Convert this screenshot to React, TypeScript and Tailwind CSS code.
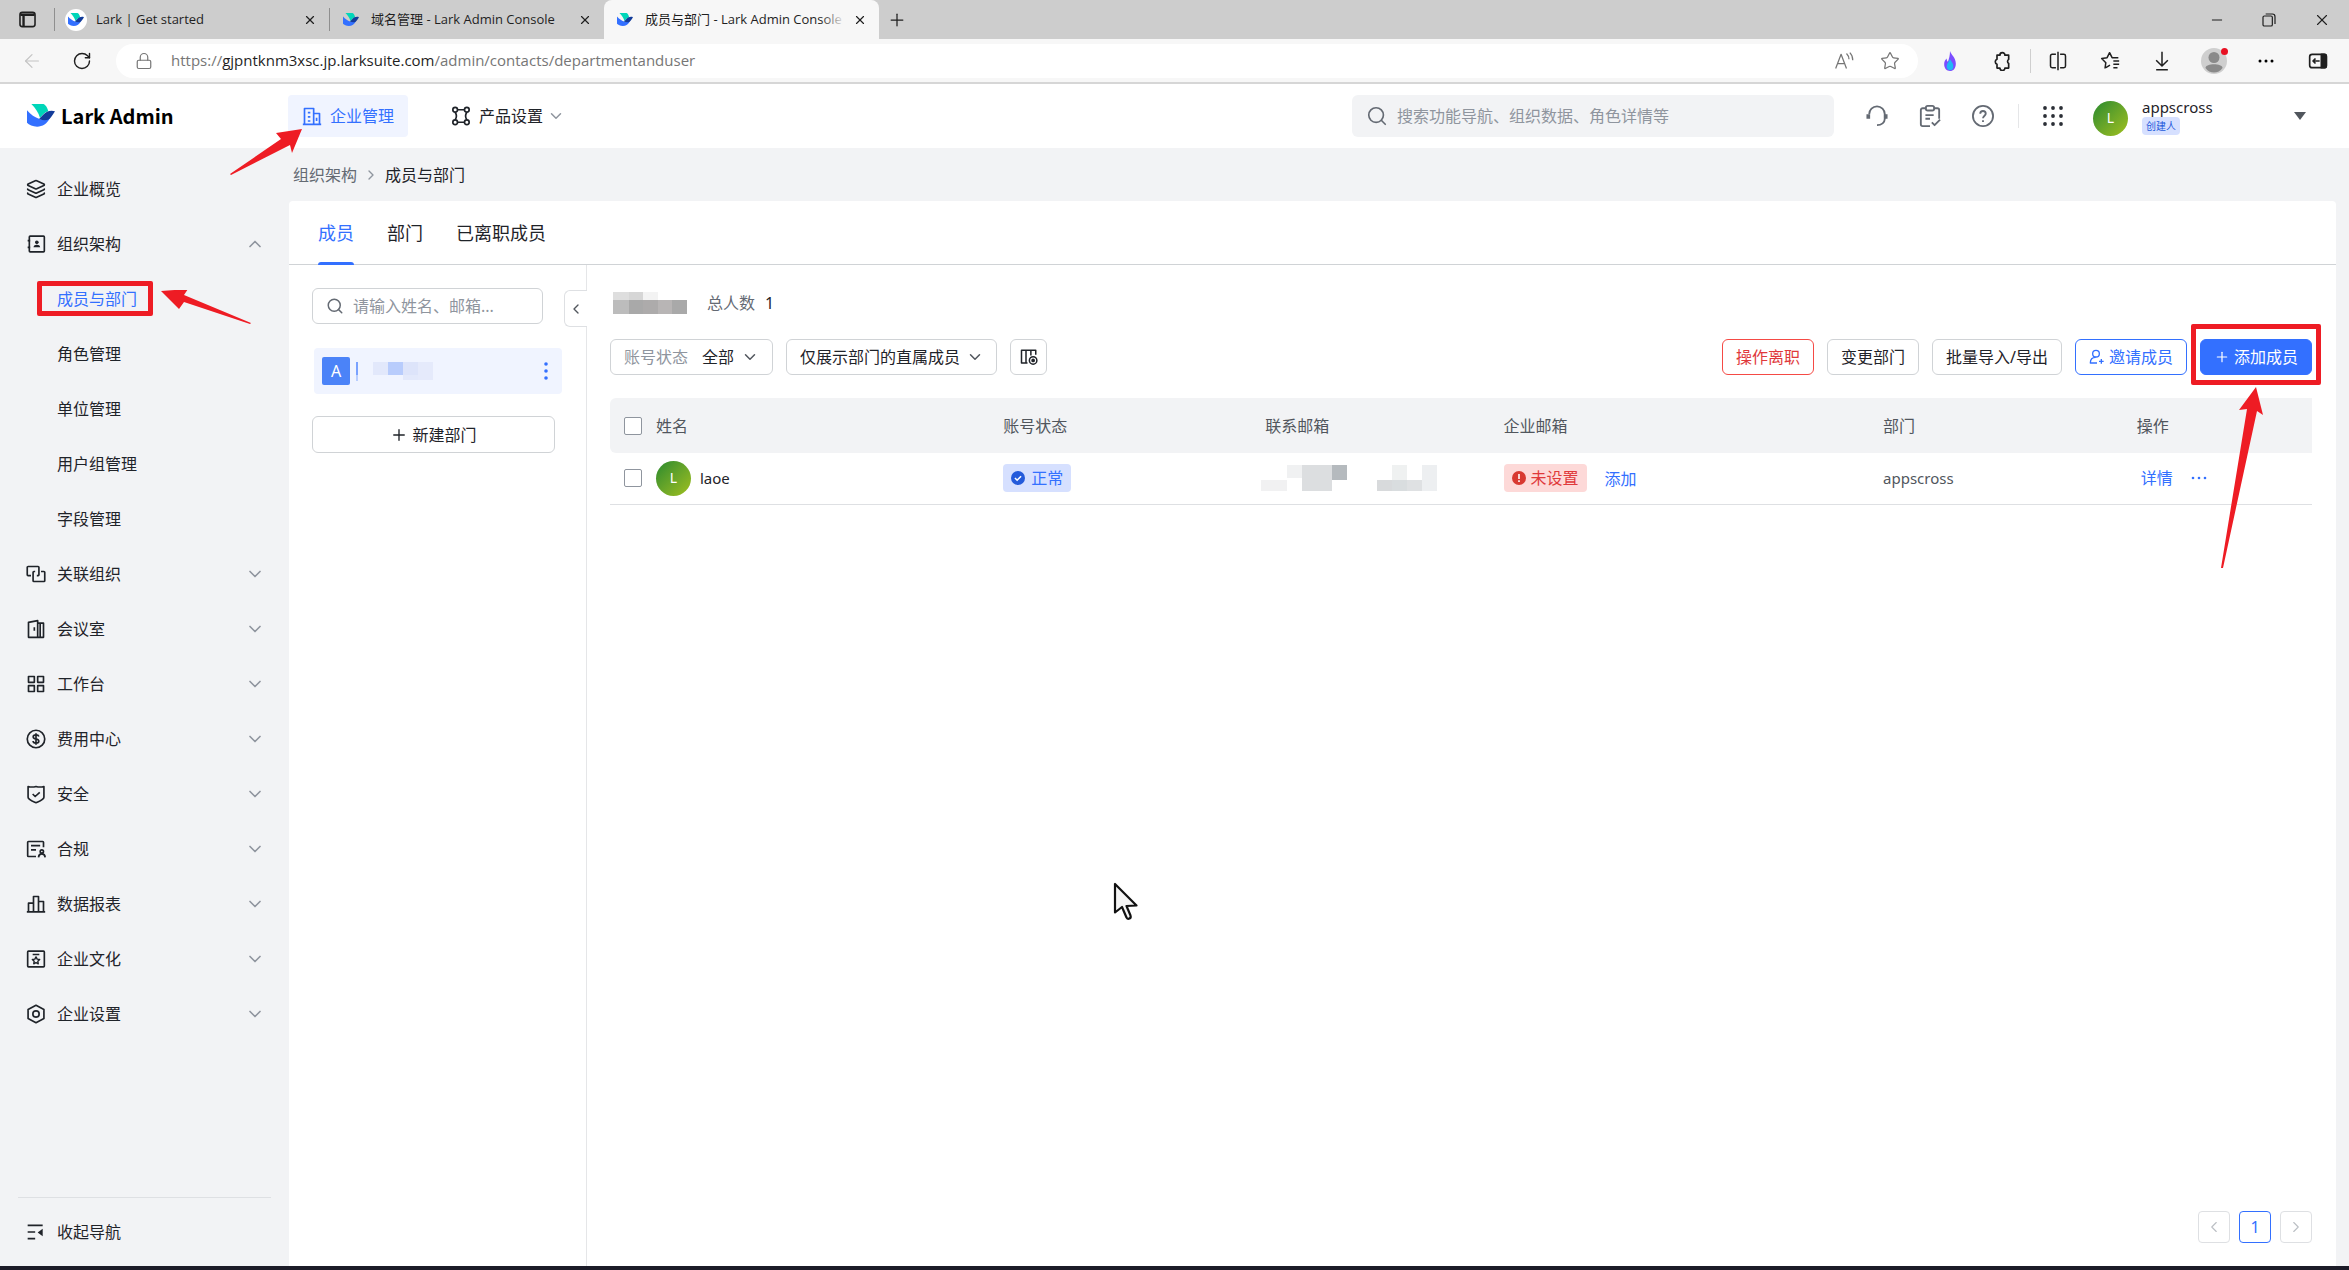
import type { ReactNode } from "react";
import { Layers, Search, X, Plus, Minus, Lock, RotateCw, ArrowLeft, Star, ChevronDown, ChevronUp, ChevronLeft, ChevronRight } from "lucide-react";

const Svg = ({ children, className = "size-5" }: { children: ReactNode; className?: string }) => (
  <svg viewBox="0 0 24 24" fill="none" stroke="currentColor" strokeWidth={2} strokeLinejoin="round" className={`${className} shrink-0`}>
    {children}
  </svg>
);

const LarkLogo = ({ className }: { className: string }) => (
  <svg viewBox="0 0 29 24" className={`${className} shrink-0`}>
    <path d="M4.500 0h12.500c1.500 0 4.500 4 5 7.500-3 .5-5.500 3.500-8.500 7C12 9 8.500 4 4.500 0z" fill="#00d6b9" />
    <path d="M0 6.500c4 4.500 8 7.500 13 9 4 1.200 8 .5 11-1.500-3 6.500-8 9.500-13.500 9.500C6 23.500 2 21.500 0 19.500z" fill="#3370ff" />
    <path d="M29 7.500c-5-1.500-9 .3-12 3.500l-4.500 4.500c5 2 10 2 12.500-2C26.500 11.500 27.500 9.500 29 7.500z" fill="#133c9a" />
  </svg>
);

type NavItem = { label: string; icon?: ReactNode; chevron?: "up" | "down"; active?: boolean };

const navItems: NavItem[] = [
  { label: "企业概览", icon: <Layers className="size-5 shrink-0" /> },
  {
    label: "组织架构",
    chevron: "up",
    icon: (
      <Svg>
        <rect x="4" y="2.500" width="18" height="19" rx="1" />
        <path d="M2 8h3M2 16h3" />
        <circle cx="13" cy="10" r="2.200" fill="currentColor" stroke="none" />
        <path d="M9 16c0-4 8-4 8 0z" fill="currentColor" stroke="none" />
      </Svg>
    ),
  },
  { label: "成员与部门", active: true },
  { label: "角色管理" },
  { label: "单位管理" },
  { label: "用户组管理" },
  { label: "字段管理" },
  {
    label: "关联组织",
    chevron: "down",
    icon: (
      <Svg>
        <path d="M6 14H2.500a1 1 0 0 1-1-1V4a1 1 0 0 1 1-1h12a1 1 0 0 1 1 1v9a1 1 0 0 1-1 1H13" />
        <path d="M18 9h3.500a1 1 0 0 1 1 1v10a1 1 0 0 1-1 1h-12a1 1 0 0 1-1-1V10a1 1 0 0 1 1-1H11" />
      </Svg>
    ),
  },
  {
    label: "会议室",
    chevron: "down",
    icon: (
      <Svg>
        <path d="M3 4l11-2v20H3zM14 5h7v17h-7M17 5v17M10 10v4" />
      </Svg>
    ),
  },
  {
    label: "工作台",
    chevron: "down",
    icon: (
      <Svg>
        <path d="M3 3h7v7H3zM14 3h7v7h-7zM3 14h7v7H3zM14 14h7v7h-7z" />
      </Svg>
    ),
  },
  {
    label: "费用中心",
    chevron: "down",
    icon: (
      <Svg>
        <circle cx="12" cy="12" r="10.500" />
        <path d="M15.500 9c-.5-1.500-2-2-3.500-2-4.500 0-4.500 4.500 0 5s4.500 5 0 5c-2 0-3.500-1-3.500-2.500M12 5v14" />
      </Svg>
    ),
  },
  {
    label: "安全",
    chevron: "down",
    icon: (
      <Svg>
        <path d="M2.500 3c3 .8 6.500.8 9.500 0 3 .8 6.500.8 9.500 0v13c0 3-6 5-9.500 6.500C8.500 21 2.500 19 2.500 16zM8 12l3 3 5.500-5" />
      </Svg>
    ),
  },
  {
    label: "合规",
    chevron: "down",
    icon: (
      <Svg>
        <path d="M12 21H3a1 1 0 0 1-1-1V4a1 1 0 0 1 1-1h17a1 1 0 0 1 1 1v6M6 8h11M6 13h6" />
        <circle cx="19" cy="15" r="2" />
        <path d="M15 22c.5-5.500 7.500-5.500 8 0" />
      </Svg>
    ),
  },
  {
    label: "数据报表",
    chevron: "down",
    icon: (
      <Svg>
        <path d="M1 21.500h22M3 21V11h6M9 21V3h6v18M15 9h6v12" />
      </Svg>
    ),
  },
  {
    label: "企业文化",
    chevron: "down",
    icon: (
      <Svg>
        <rect x="2" y="2.500" width="20" height="19" rx="1" />
        <path d="M8 6.500h8M12 9.500l1.400 2.700 3 .4-2.200 2.100.5 3-2.700-1.400-2.700 1.400.5-3-2.200-2.100 3-.4z" strokeWidth={1.700} />
      </Svg>
    ),
  },
  {
    label: "企业设置",
    chevron: "down",
    icon: (
      <Svg>
        <path d="M12 1.500l9.500 5v11l-9.500 5-9.500-5v-11z" />
        <circle cx="12" cy="12" r="3.800" />
      </Svg>
    ),
  },
];

function BrowserTab({ title, active, round }: { title: string; active?: boolean; round?: boolean }) {
  return (
    <div className={`flex w-[275px] items-center pr-3 pl-[10px] ${active ? "rounded-t-lg bg-[#f7f7f7]" : "my-2 border-l border-[#8f8f8f]"}`}>
      <span className={`flex size-[22px] shrink-0 items-center justify-center rounded-full ${round ? "bg-white" : ""}`}>
        <LarkLogo className="w-4" />
      </span>
      <span className="relative ml-[9px] flex-1 overflow-hidden text-[13px] whitespace-nowrap">
        {title}
        {active && <span className="absolute inset-y-0 right-0 w-6 bg-linear-to-r from-transparent to-[#f7f7f7]" />}
      </span>
      <button aria-label="关闭标签页" className="ml-2">
        <X className="size-[14px]" strokeWidth={2} />
      </button>
    </div>
  );
}

function BrowserChrome() {
  return (
    <div className="font-['Open_Sans','Noto_Sans_CJK_SC',sans-serif] text-[#1f1f1f]">
      <div className="flex h-[39px] bg-[#cdcdcd]">
        <button aria-label="标签操作" className="w-[54px] pl-[18px]">
          <Svg className="size-[19px]">
            <rect x="2.500" y="3" width="19" height="18" rx="3" />
            <path d="M3 6h18M7 6v15" strokeWidth={3} />
          </Svg>
        </button>
        <BrowserTab title="Lark | Get started" round />
        <BrowserTab title="域名管理 - Lark Admin Console" />
        <BrowserTab title="成员与部门 - Lark Admin Console" active />
        <button aria-label="新建标签页" className="ml-2">
          <Plus className="size-5" strokeWidth={1.500} />
        </button>
        <div className="ml-auto flex items-center gap-9 pr-[18px]">
          <button aria-label="最小化"><Minus className="size-4" strokeWidth={1.500} /></button>
          <button aria-label="还原">
            <Svg className="size-4">
              <rect x="3" y="6" width="14" height="15" rx="2" strokeWidth={1.800} />
              <path d="M7 3h10a4 4 0 0 1 4 4v11" strokeWidth={1.800} />
            </Svg>
          </button>
          <button aria-label="关闭"><X className="size-[18px]" strokeWidth={1.500} /></button>
        </div>
      </div>
      <div className="flex h-[45px] items-center border-b-2 border-[#d6d6d6] bg-[#f7f7f7]">
        <button aria-label="后退" className="ml-[21px] text-[#c4c4c4]"><ArrowLeft className="size-[22px]" strokeWidth={1.300} /></button>
        <button aria-label="刷新" className="ml-[29px]"><RotateCw className="size-5" strokeWidth={1.700} /></button>
        <div className="ml-6 flex h-[34px] flex-1 items-center rounded-full bg-white pr-[18px] pl-[19px] text-[15px] text-[#767676]">
          <Lock className="size-[18px]" strokeWidth={1.600} />
          <span className="ml-[18px]">
            https://<span className="text-[#1f1f1f]">gjpntknm3xsc.jp.larksuite.com</span>/admin/contacts/departmentanduser
          </span>
          <button aria-label="朗读此页" className="ml-auto">
            <Svg className="size-5">
              <path d="M2 21L8.500 4 15 21M4.500 15h8M15 3c2 2 3 4 3 7M19 2c2.500 2.500 3.500 6 3.500 9" strokeWidth={1.500} />
            </Svg>
          </button>
          <button aria-label="收藏" className="ml-[26px]"><Star className="size-5" strokeWidth={1.500} /></button>
        </div>
        <div className="flex items-center gap-8 pr-[21px] pl-[22px]">
          <button aria-label="扩展程序">
            <svg viewBox="0 0 24 24" className="size-5">
              <path d="M12 0c1 4 7 8 7 15 0 6-3 9-7 9s-7-3-7-8c0-3 1-5 3-7 0 2 .5 3 1.500 4C11 9 12 5 12 0z" fill="#7b4dff" />
              <path d="M12 10c2 3 4 5 4 8.500S14 23 12 23s-4-1.500-4-4.500 2-5 4-8.500z" fill="#22b8f5" />
            </svg>
          </button>
          <button aria-label="扩展">
            <Svg className="size-5">
              <path d="M6 5h3.500a3 3 0 0 1 6 0H20v5a3 3 0 0 0 0 5v5.500h-4.500a3 3 0 0 1-6 0H6V16a3.200 3.200 0 0 1 0-6z" />
            </Svg>
          </button>
          <button aria-label="分屏" className="relative ml-1">
            <span className="absolute -left-[18px] h-6 w-px -translate-y-0.5 bg-[#cfcfcf]" />
            <Svg className="size-5">
              <path d="M9.500 4H5a2 2 0 0 0-2 2v12a2 2 0 0 0 2 2h4.500M14.500 4H19a2 2 0 0 1 2 2v12a2 2 0 0 1-2 2h-4.500M12 1v22" strokeWidth={1.800} />
            </Svg>
          </button>
          <button aria-label="收藏夹">
            <Svg className="size-5">
              <path d="M6 21l1-7-5-5 6.500-1L11.500 2l3 6H22M7 20l5-3M16 12h7M16 16h7M16 20h5" strokeWidth={1.800} />
            </Svg>
          </button>
          <button aria-label="下载">
            <Svg className="size-5">
              <path d="M12 1v17M5 11l7 7 7-7M5 22.500h14" strokeWidth={1.800} />
            </Svg>
          </button>
          <button aria-label="用户" className="relative -mx-[3px] size-[26px]">
            <svg viewBox="0 0 26 26">
              <circle cx="13" cy="13" r="13" fill="#cfcfcf" />
              <circle cx="13" cy="9.500" r="5.500" fill="#8a8a8a" />
              <path d="M4.500 20c0-5 17-5 17 0-4 6-13 6-17 0z" fill="#8a8a8a" />
            </svg>
            <span className="absolute top-0 -right-px size-[7px] rounded-full bg-[#e81123]" />
          </button>
          <button aria-label="更多">
            <svg viewBox="0 0 20 20" className="size-5">
              <circle cx="4" cy="10" r="1.500" />
              <circle cx="10" cy="10" r="1.500" />
              <circle cx="16" cy="10" r="1.500" />
            </svg>
          </button>
          <button aria-label="边栏">
            <Svg className="size-5">
              <rect x="2" y="4" width="20" height="16" rx="3" />
              <path d="M16 4h4a2 2 0 0 1 2 2v12a2 2 0 0 1-2 2h-4z" fill="currentColor" />
              <path d="M14 12H6M9 9l-3 3 3 3" />
            </Svg>
          </button>
        </div>
      </div>
    </div>
  );
}

function Header() {
  return (
    <header className="flex h-16 items-center bg-white text-base">
      <a href="#" className="ml-[27px] flex w-[261px] items-center gap-[6px] font-['Noto_Sans_CJK_SC',sans-serif] text-xl font-bold text-black">
        <LarkLogo className="w-7" />
        Lark Admin
      </a>
      <a href="#" className="relative flex h-[42px] items-center gap-2 rounded bg-[#f0f4ff] pr-[14px] pl-[14px] text-[#3370ff]">
        <Svg>
          <path d="M1 22h22M3 22V3h11v19M14 9h7v13M7 8h3M7 13h3M7 18h3M17.500 14v4" />
        </Svg>
        企业管理
        <svg viewBox="0 0 72 46" className="absolute top-[34px] -left-[58px] h-[46px] w-[72px]" fill="#ee1c24">
          <path d="M72 0L46 4l5 6L0 45l1 1 59-30 2 8z" />
        </svg>
      </a>
      <button className="ml-[43px] flex items-center gap-2">
        <Svg>
          <circle cx="5" cy="4.500" r="2.800" />
          <circle cx="19" cy="4.500" r="2.800" />
          <circle cx="5" cy="19.500" r="2.800" />
          <circle cx="19" cy="19.500" r="2.800" />
          <path d="M8 4.500h8M8 19.500h8M5 7.500c2 3 2 6 0 9M19 7.500c-2 3-2 6 0 9" />
        </Svg>
        产品设置
        <ChevronDown className="-ml-1 size-[18px] text-[#8f959e]" />
      </button>
      <label className="ml-auto flex h-[42px] w-[482px] items-center rounded-md bg-[#f2f3f5] pl-[14px] text-[#646a73]">
        <Search className="size-[22px]" strokeWidth={1.800} />
        <input aria-label="搜索" placeholder="搜索功能导航、组织数据、角色详情等" className="ml-[9px] flex-1 outline-none placeholder:text-[#8f959e]" />
      </label>
      <div className="ml-8 flex items-center gap-[31px] text-[#646a73]">
        <button aria-label="客服">
          <Svg className="size-[22px]">
            <path d="M3.500 10a8.500 8.500 0 0 1 17 0v5c0 4-3.500 7-8.500 7" />
            <path d="M2.500 10v5M21.500 10v5" strokeWidth={4} />
          </Svg>
        </button>
        <button aria-label="任务">
          <Svg className="size-[22px]">
            <path d="M8 3.500H4a2 2 0 0 0-2 2V21a2 2 0 0 0 2 2h8M16 3.500h4a2 2 0 0 1 2 2V15M7 11h9M7 15h5M14 19l3 3 6-6" />
            <rect x="7.500" y="1" width="9" height="5" rx="2" />
          </Svg>
        </button>
        <button aria-label="帮助">
          <Svg className="size-[22px]">
            <circle cx="12" cy="12" r="11" />
            <path d="M9 9.500c0-4 6-4 6 0 0 2-3 2.500-3 5M12 16.500v2" />
          </Svg>
        </button>
      </div>
      <span className="ml-6 h-6 w-px bg-[#e5e6e8]" />
      <button aria-label="应用" className="ml-6 text-[#2b2f36]">
        <svg viewBox="0 0 20 20" className="size-5" fill="currentColor">
          {[2, 10, 18].map((y) => [2, 10, 18].map((x) => <circle key={`${x}-${y}`} cx={x} cy={y} r="1.900" />))}
        </svg>
      </button>
      <Avatar className="mt-1 ml-[30px]" />
      <button className="ml-[14px] flex max-w-[207px] flex-1 items-center justify-between pr-[43px] text-left">
        <span>
          <span className="block text-[15px] leading-[18px]">appscross</span>
          <span className="mt-px block w-[38px] rounded bg-[#d6e0ff] text-center text-[10px] leading-[18px] text-[#245bdb]">创建人</span>
        </span>
        <span className="border-x-6 border-t-8 border-x-transparent border-t-[#51565d]" />
      </button>
    </header>
  );
}

function Avatar({ className = "" }: { className?: string }) {
  return (
    <span className={`flex size-[35px] shrink-0 items-center justify-center rounded-full bg-linear-to-br from-[#1f8a2d] to-[#9fc01c] text-sm text-white ${className}`}>
      L
    </span>
  );
}

function Sidebar() {
  return (
    <aside className="flex w-[289px] shrink-0 flex-col pt-[13px]">
      <nav className="flex-1">
        {navItems.map((item) => (
          <a key={item.label} href="#" className={`relative flex h-[55px] items-center gap-[11px] pr-6 pl-[26px] ${item.active ? "text-[#3370ff]" : ""}`}>
            <span className="flex w-5 shrink-0">{item.icon}</span>
            {item.label}
            {item.chevron === "up" && <ChevronUp className="ml-auto size-5 text-[#8f959e]" />}
            {item.chevron === "down" && <ChevronDown className="ml-auto size-5 text-[#8f959e]" />}
            {item.active && (
              <>
                <span className="absolute inset-y-[10px] left-[37px] w-[116px] rounded-xs border-5 border-[#ee1c24]" />
                <svg viewBox="0 0 90 34" className="absolute top-[19px] left-[161px] h-[34px] w-[90px]" fill="#ee1c24">
                  <path d="M0 1l27-2-4 6 67 28-1 1-66-22-5 7z" />
                </svg>
              </>
            )}
          </a>
        ))}
      </nav>
      <button className="mx-[18px] flex h-[69px] items-center gap-[11px] border-t border-[#dee0e3] pl-2">
        <Svg>
          <path d="M2 4h18M2 12h9M2 20h9" />
          <path d="M20 8v9l-6-4.500z" fill="currentColor" stroke="none" />
        </Svg>
        收起导航
      </button>
    </aside>
  );
}

function DepartmentPanel() {
  return (
    <div className="relative w-[298px] shrink-0 border-r border-[#e5e6e8] pt-[23px] pl-[23px]">
      <label className="flex h-9 w-[231px] items-center rounded-md border border-[#d0d3d6] pl-[13px] text-[#646a73]">
        <Search className="size-[18px] shrink-0" strokeWidth={2} />
        <input aria-label="搜索成员" placeholder="请输入姓名、邮箱..." className="ml-[9px] w-full min-w-0 outline-none placeholder:text-[#8f959e]" />
      </label>
      <button aria-label="收起部门" className="absolute top-[25px] -right-px flex h-[37px] w-[23px] items-center rounded-l-md border border-r-0 border-[#dee0e3] bg-white pl-[3px] text-[#51565d]">
        <ChevronLeft className="size-4" />
      </button>
      <div className="mt-6 mr-6 ml-[2px] flex h-[46px] items-center rounded bg-[#f0f4ff] pl-2">
        <span className="flex size-7 items-center justify-center rounded-xs bg-[#4b83f8] text-white">A</span>
        <Mosaic
          className="ml-[6px] h-[19px] w-[78px]"
          cells={[
            [0, 0, 2, 13, "#7aa2ff"], [0, 13, 2, 6, "#b9ceff"], [17, 0, 15, 13, "#e2e8fb"],
            [32, 0, 15, 13, "#b8ccfc"], [47, 0, 15, 13, "#dde4fa"], [62, 0, 15, 18, "#e5eafb"], [47, 13, 15, 5, "#e3e9fb"],
          ]}
        />
        <button aria-label="部门操作" className="mr-[11px] ml-auto text-[#3370ff]">
          <svg viewBox="0 0 10 18" className="h-[18px] w-[10px]" fill="currentColor">
            <circle cx="5" cy="2" r="1.800" />
            <circle cx="5" cy="9" r="1.800" />
            <circle cx="5" cy="16" r="1.800" />
          </svg>
        </button>
      </div>
      <button className="mt-[22px] flex h-[37px] w-[243px] items-center justify-center gap-1 rounded-md border border-[#d0d3d6]">
        <Plus className="size-[18px]" strokeWidth={1.800} />
        新建部门
      </button>
    </div>
  );
}

// censored text, drawn as blocks: x, y, width, height, colour
function Mosaic({ cells, className }: { cells: [number, number, number, number, string][]; className: string }) {
  return (
    <svg className={className} shapeRendering="crispEdges">
      {cells.map(([x, y, w, h, fill]) => (
        <rect key={`${x}-${y}`} x={x} y={y} width={w} height={h} fill={fill} />
      ))}
    </svg>
  );
}

const box = "h-9 rounded-md border border-[#d0d3d6] px-[13px]";
const tick = "size-[18px] shrink-0 appearance-none rounded-xs border border-[#8f959e] bg-white";

function MemberPanel() {
  return (
    <section className="relative flex min-w-0 flex-1 flex-col pt-5 pr-6 pb-[23px] pl-[23px]">
      <div className="flex h-9 items-center">
        <Mosaic
          className="ml-[3px] h-[22px] w-[74px]"
          cells={[
            [0, 0, 16, 8, "#dedede"], [16, 0, 14, 8, "#d6d6d6"], [30, 0, 15, 8, "#f3f3f3"],
            [0, 8, 16, 14, "#bcbcbc"], [16, 8, 14, 14, "#a9a9a9"], [30, 8, 15, 14, "#adabab"], [45, 8, 14, 14, "#b8b5b5"], [59, 8, 15, 14, "#a9a9a9"],
          ]}
        />
        <span className="ml-5 text-[#646a73]">总人数</span>
        <span className="ml-[10px]">1</span>
      </div>
      <div className="mt-[18px] flex items-center gap-[13px]">
        <label className={`${box} flex items-center gap-[14px]`}>
          <span className="text-[#8f959e]">账号状态</span>
          <span className="relative flex items-center">
            <select className="appearance-none pr-6 outline-none">
              <option>全部</option>
            </select>
            <ChevronDown className="pointer-events-none absolute right-0 size-[18px] text-[#51565d]" />
          </span>
        </label>
        <span className={`${box} relative flex items-center`}>
          <select aria-label="成员范围" className="appearance-none pr-[22px] outline-none">
            <option>仅展示部门的直属成员</option>
          </select>
          <ChevronDown className="pointer-events-none absolute right-3 size-[18px] text-[#51565d]" />
        </span>
        <button aria-label="列设置" className="flex h-9 w-[37px] items-center justify-center rounded-md border border-[#d0d3d6]">
          <Svg className="size-[18px]">
            <path d="M10 20H2V3h19v6M8 3v17M14.500 3v7" />
            <circle cx="17.500" cy="16.500" r="5" />
            <circle cx="17.500" cy="16.500" r="1.500" fill="currentColor" />
          </Svg>
        </button>
        <div className="ml-auto flex gap-[13px]">
          <button className="h-9 rounded-md border border-[#f54a45] px-[13px] text-[#e0393b]">操作离职</button>
          <button className={box}>变更部门</button>
          <button className={box}>批量导入/导出</button>
          <button className="flex h-9 items-center gap-1 rounded-md border border-[#3370ff] px-[13px] text-[#3370ff]">
            <Svg className="size-4">
              <circle cx="10.500" cy="7" r="5" />
              <path d="M12 21H2c0-5 3-8.500 8-8.500M18.500 15v7M15 18.500h7" />
            </Svg>
            邀请成员
          </button>
          <button className="relative flex h-9 items-center gap-1 rounded-md border border-[#3370ff] bg-[#3370ff] px-[13px] text-white">
            <Plus className="size-4" strokeWidth={1.800} />
            添加成员
            <span className="absolute -inset-x-[10px] -top-4 -bottom-[11px] rounded-xs border-5 border-[#ee1c24]" />
            <svg viewBox="0 0 44 182" className="absolute top-[47px] left-[19px] h-[182px] w-[44px]" fill="#ee1c24">
              <path d="M36 0l7 28-6-4L3 181H1L27 22l-8 1z" />
            </svg>
          </button>
        </div>
      </div>
      <table className="mt-[23px] w-full table-fixed text-left">
        <thead className="h-[55px] bg-[#f2f3f5] text-[#51565d]">
          <tr>
            <th className="w-[23.100%] rounded-l-md pl-[14px] font-normal">
              <span className="flex items-center gap-[14px]">
                <input type="checkbox" aria-label="全选" className={tick} />
                姓名
              </span>
            </th>
            <th className="w-[15.400%] font-normal">账号状态</th>
            <th className="w-[14%] font-normal">联系邮箱</th>
            <th className="w-[22.300%] font-normal">企业邮箱</th>
            <th className="w-[14.900%] font-normal">部门</th>
            <th className="font-normal">操作</th>
          </tr>
        </thead>
        <tbody>
          <tr className="h-[51px] border-b border-[#dee0e3]">
            <td className="pl-[14px]">
              <span className="flex items-center">
                <input type="checkbox" aria-label="选择 laoe" className={tick} />
                <Avatar className="ml-[14px]" />
                <span className="ml-[9px] text-[15px]">laoe</span>
              </span>
            </td>
            <td>
              <span className="inline-flex h-7 items-center gap-[6px] rounded bg-[#d6e0ff] px-2 text-[#3370ff]">
                <svg viewBox="0 0 16 16" className="size-[14px]">
                  <circle cx="8" cy="8" r="8" fill="#245bdb" />
                  <path d="M4.500 8l2.500 2.500L11.500 6" fill="none" stroke="#fff" strokeWidth={1.800} />
                </svg>
                正常
              </span>
            </td>
            <td>
              <Mosaic
                className="-ml-[6px] h-[27px] w-[190px]"
                cells={[
                  [2, 15, 26, 11, "#f1f1f2"], [28, 0, 15, 13, "#f0f1f2"], [43, 0, 30, 26, "#dcdee0"], [73, 0, 15, 15, "#b5babe"],
                  [118, 15, 15, 11, "#d8dadc"], [133, 0, 15, 15, "#eff1f1"], [133, 15, 15, 11, "#d9dddf"], [148, 15, 15, 11, "#dfe1e3"], [163, 0, 15, 26, "#edeff1"],
                ]}
              />
            </td>
            <td>
              <span className="inline-flex h-7 items-center gap-[5px] rounded bg-[#fdd9d8] px-2 text-[#e0393b]">
                <svg viewBox="0 0 16 16" className="size-[14px]">
                  <circle cx="8" cy="8" r="8" fill="#d83931" />
                  <path d="M8 3.500v5.500M8 10.500v2" stroke="#fff" strokeWidth={1.800} />
                </svg>
                未设置
              </span>
              <a href="#" className="ml-[18px] text-[#3370ff]">添加</a>
            </td>
            <td className="text-[15px] text-[#51565d]">appscross</td>
            <td>
              <span className="flex items-center gap-[18px] pl-1 text-[#3370ff]">
                <a href="#">详情</a>
                <button aria-label="更多操作">
                  <svg viewBox="0 0 16 4" className="h-1 w-4" fill="currentColor">
                    <circle cx="2" cy="2" r="1.300" />
                    <circle cx="8" cy="2" r="1.300" />
                    <circle cx="14" cy="2" r="1.300" />
                  </svg>
                </button>
              </span>
            </td>
          </tr>
        </tbody>
      </table>
      <div className="mt-auto flex justify-end gap-[9px]">
        <button aria-label="上一页" className="flex size-8 items-center justify-center rounded border border-[#dee0e3] text-[#bbbfc4]">
          <ChevronLeft className="size-[18px]" strokeWidth={1.500} />
        </button>
        <button className="size-8 rounded border border-[#3370ff] text-[#3370ff]">1</button>
        <button aria-label="下一页" className="flex size-8 items-center justify-center rounded border border-[#dee0e3] text-[#bbbfc4]">
          <ChevronRight className="size-[18px]" strokeWidth={1.500} />
        </button>
      </div>
      <svg viewBox="0 0 26 40" className="absolute top-[617px] left-[526px] h-10 w-[26px]">
        <path d="M2 2v28.500l7-5.500 4.500 10.500c1.500 2.500 5 1 4-2L13.500 24l10-.5z" fill="#f5f5f5" stroke="#111" strokeWidth={2.200} strokeLinejoin="round" />
      </svg>
    </section>
  );
}

export default function App() {
  return (
    <div className="flex min-h-screen flex-col border-b-4 border-[#1c1c28] bg-[#f2f3f5] font-['Noto_Sans','Noto_Sans_CJK_SC',sans-serif] text-base text-[#1f2329]">
      <BrowserChrome />
      <Header />
      <div className="flex flex-1">
        <Sidebar />
        <main className="mr-[13px] flex min-w-0 flex-1 flex-col">
          <nav className="flex h-[53px] items-center gap-[6px] pl-1">
            <a href="#" className="text-[#646a73]">组织架构</a>
            <ChevronRight className="size-4 text-[#8f959e]" />
            <a href="#">成员与部门</a>
          </nav>
          <div className="flex flex-1 flex-col rounded-t bg-white">
            <div className="flex h-16 gap-[33px] border-b border-[#d0d3d6] pl-[29px] text-lg">
              <button className="relative text-[#3370ff]">
                成员
                <span className="absolute inset-x-0 -bottom-px h-[3px] rounded-t bg-[#3370ff]" />
              </button>
              <button>部门</button>
              <button>已离职成员</button>
            </div>
            <div className="flex flex-1">
              <DepartmentPanel />
              <MemberPanel />
            </div>
          </div>
        </main>
      </div>
    </div>
  );
}
